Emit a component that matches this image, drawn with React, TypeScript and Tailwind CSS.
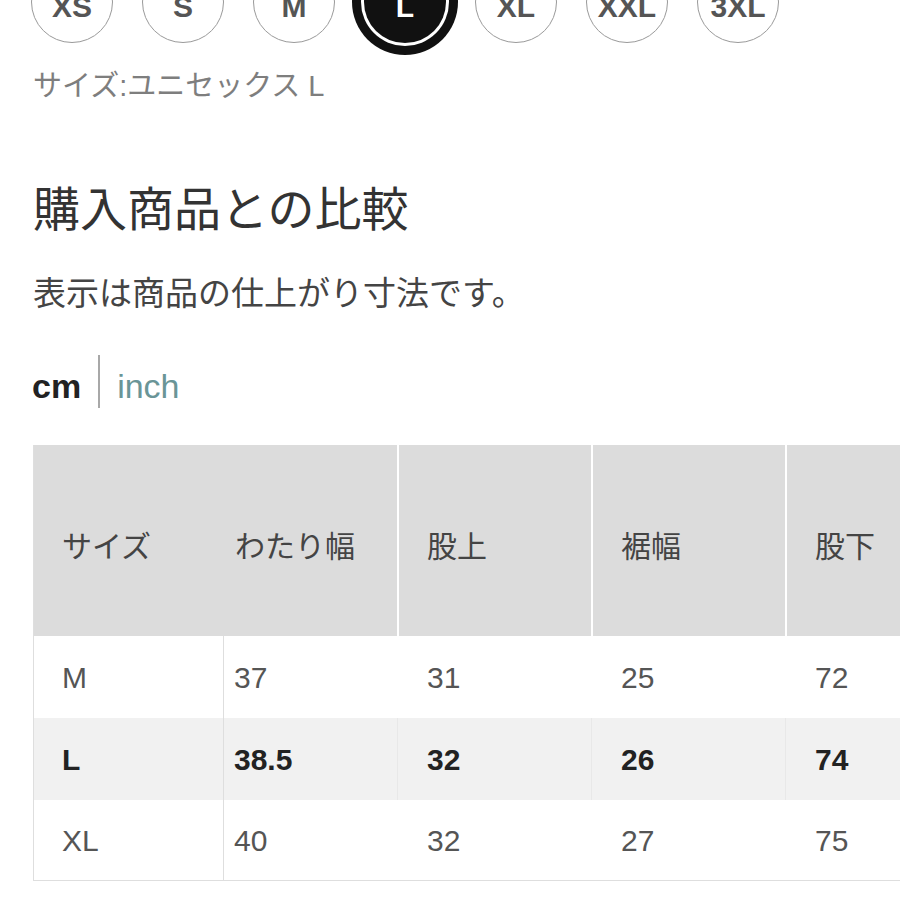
const sizes = ['XS', 'S', 'M', 'L', 'XL', 'XXL', '3XL']

const headers = ['サイズ', 'わたり幅', '股上', '裾幅', '股下']

const rows = [
  { size: 'M', values: ['37', '31', '25', '72'], current: false },
  { size: 'L', values: ['38.5', '32', '26', '74'], current: true },
  { size: 'XL', values: ['40', '32', '27', '75'], current: false },
]

function SizeChip({ label, selected }: { label: string; selected: boolean }) {
  if (selected) {
    return (
      <div className="flex h-[82px] w-[82px] shrink-0 items-center justify-center rounded-full bg-[#111] pt-[8px] text-[30px] font-bold text-white shadow-[0_0_0_3px_#fff,0_0_0_12px_#111]">
        {label}
      </div>
    )
  }
  return (
    <div className="flex h-[82px] w-[82px] shrink-0 items-center justify-center rounded-full border-[1.5px] border-[#9a9a9a] pt-[8px] text-[30px] font-bold text-[#555]">
      {label}
    </div>
  )
}

export default function App() {
  return (
    <div
      className="h-[900px] w-[900px] overflow-hidden bg-white"
      style={{ fontFamily: '"Liberation Sans", "Noto Sans CJK JP", sans-serif' }}
    >
      {/* size picker, top is cut off */}
      <div className="mt-[-39px] flex gap-[29px] pl-[31px]">
        {sizes.map((s) => (
          <SizeChip key={s} label={s} selected={s === 'L'} />
        ))}
      </div>

      <div className="mt-[24px] pl-[33px] text-[29px] leading-[38px] text-[#7e7e7e]">
        サイズ:ユニセックス L
      </div>

      <h2 className="mt-[73px] pl-[33px] text-[47px] font-normal leading-[64px] text-[#333]">
        購入商品との比較
      </h2>

      <p className="mt-[30px] pl-[33px] text-[33px] leading-[44px] text-[#444]">
        表示は商品の仕上がり寸法です。
      </p>

      <div className="mt-[39px] flex items-start pl-[32px]">
        <span className="mt-[11px] text-[34px] font-bold leading-[40px] text-[#222]">cm</span>
        <span className="mx-[17px] h-[53px] w-[2px] bg-[#a8a8a8]" />
        <span className="mt-[11px] text-[34px] leading-[40px] text-[#6a9597]">inch</span>
      </div>

      {/* comparison table, runs past the right edge */}
      <div className="ml-[33px] mt-[37px] w-[947px] border-b border-l border-[#dedede] text-[30px]">
        <div className="grid h-[191px] grid-cols-[190px_173px_194px_194px_194px] bg-[#dcdcdc] text-[30px] text-[#444]">
          {headers.map((h, i) => (
            <div
              key={h}
              className={
                i === 0
                  ? 'flex items-center pl-[28px] pt-[12px]'
                  : i === 1
                    ? 'flex items-center pl-[11px] pt-[12px]'
                    : 'flex items-center border-l-2 border-white pl-[28px] pt-[12px]'
              }
            >
              {h}
            </div>
          ))}
        </div>
        {rows.map((r, ri) => (
          <div
            key={r.size}
            className={
              r.current
                ? 'grid h-[82px] grid-cols-[190px_173px_194px_194px_194px] bg-[#f1f1f1] font-bold text-[#222]'
                : ri === 2
                  ? 'grid h-[80px] grid-cols-[190px_173px_194px_194px_194px] text-[#555]'
                  : 'grid h-[82px] grid-cols-[190px_173px_194px_194px_194px] text-[#555]'
            }
          >
            <div className="flex items-center border-r border-[#dedede] pl-[28px]">{r.size}</div>
            {r.values.map((v, i) => (
              <div
                key={i}
                className={
                  i === 0
                    ? 'flex items-center pl-[10px]'
                    : r.current
                      ? 'flex items-center border-l border-[#e8e8e8] pl-[29px]'
                      : 'flex items-center border-l border-transparent pl-[29px]'
                }
              >
                {v}
              </div>
            ))}
          </div>
        ))}
      </div>
    </div>
  )
}
